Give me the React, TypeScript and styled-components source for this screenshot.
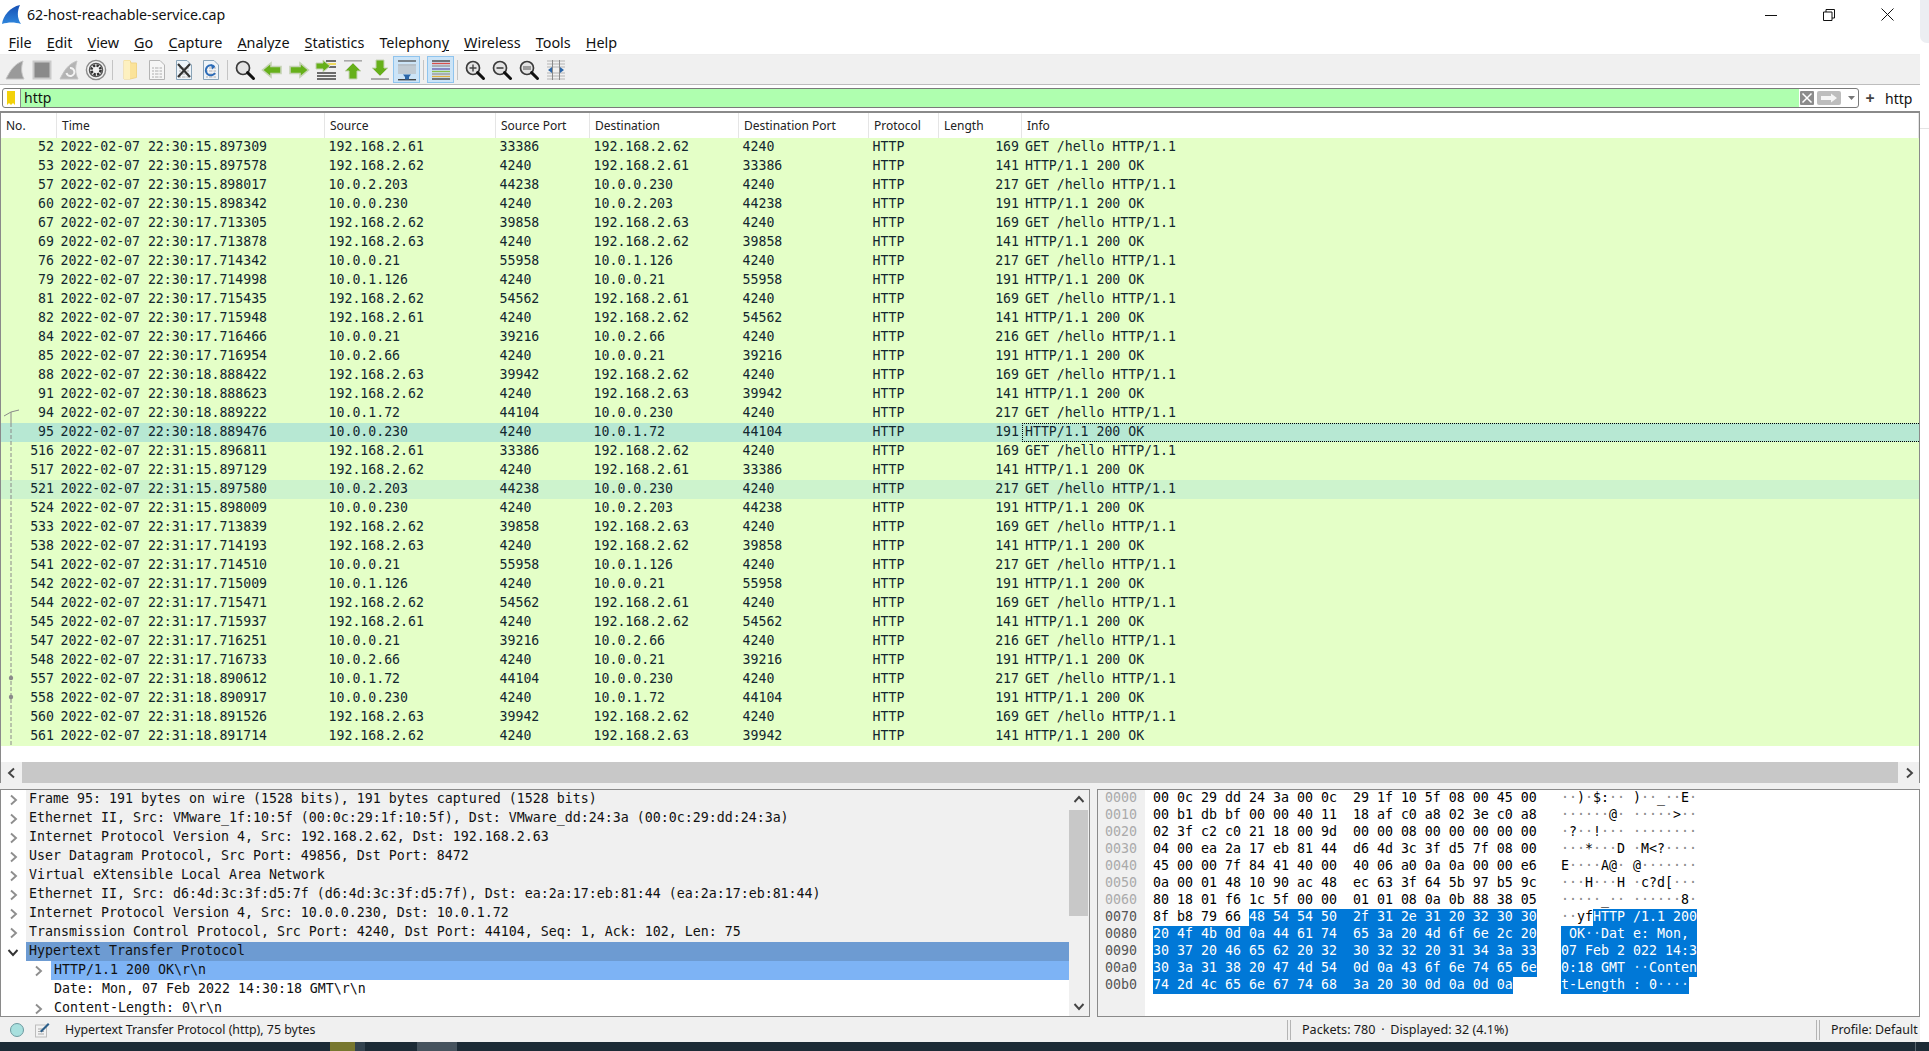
import React from "react";
import styled, { createGlobalStyle } from "styled-components";

const UI = `"Noto Sans", "Open Sans", sans-serif`;
const MONO = `"DejaVu Sans Mono", "Liberation Mono", monospace`;

const Global = createGlobalStyle`
  html, body { margin: 0; padding: 0; background: #fff; overflow: hidden; }
  * { box-sizing: border-box; }
`;

const Page = styled.div`
  width: 1929px;
  height: 1051px;
  display: flex;
  flex-direction: column;
  font-family: ${UI};
  overflow: hidden;
`;
const Desktop = styled.div`
  flex: 1;
  display: flex;
  min-height: 0;
`;
const Window = styled.div`
  width: 1920px;
  display: flex;
  flex-direction: column;
  background: #fff;
`;
const EdgeStrip = styled.div`
  flex: 1;
  background: #fff;
  display: flex;
  flex-direction: column;
`;
const EdgeCorner = styled.div`
  height: 43px;
  background: #eceef2;
  border-bottom-left-radius: 7px;
`;
const EdgeLine = styled.div`
  height: 1px;
  margin-top: 85px;
  background: #e4e4e4;
`;
const Taskbar = styled.div`
  height: 9px;
  background: #1c2b36;
  display: flex;
`;
const TaskGap = styled.div<{ $w: number }>`
  width: ${(p) => p.$w}px;
`;
const TaskTile = styled.div<{ $w: number; $c: string }>`
  width: ${(p) => p.$w}px;
  background: ${(p) => p.$c};
`;

const TitleBar = styled.div`
  height: 33px;
  display: flex;
  align-items: center;
  padding: 0 0 4px 2px;
`;
const TitleText = styled.div`
  margin-left: 6px;
  font-size: 14.2px;
  color: #111;
  flex: 1;
`;
const WinButtons = styled.div`
  display: flex;
  align-items: center;
  gap: 46px;
  padding: 0 26px 0 0;
`;
const MenuBar = styled.div`
  height: 22px;
  display: flex;
  align-items: center;
  padding: 0 0 2px 8.5px;
  gap: 15.1px;
  border-bottom: 1px solid #eeeeee;
  font-size: 14.4px;
  color: #111;
`;
const MenuItem = styled.span`
  white-space: pre;
  u { text-underline-offset: 2px; }
`;
const ToolBar = styled.div`
  height: 30px;
  background: #f0f0f0;
  border-bottom: 1px solid #bdbdbd;
  display: flex;
  align-items: center;
  padding-left: 1px;
`;
const ToolButton = styled.div<{ $active?: boolean }>`
  width: 27px;
  height: 27px;
  display: flex;
  align-items: center;
  justify-content: center;
  background: ${(p) => (p.$active ? "#cce4f7" : "transparent")};
  border: 1px solid ${(p) => (p.$active ? "#8fc4ee" : "transparent")};
`;
const ToolSep = styled.div`
  width: 1px;
  height: 20px;
  margin: 0 3px;
  background: #c4c4c4;
`;
const FilterBar = styled.div`
  height: 26px;
  padding: 3px 0 3px 2px;
  display: flex;
  align-items: center;
  background: #fff;
`;
const FilterBox = styled.div`
  width: 1857px;
  height: 20px;
  border: 1px solid #7a7a7a;
  border-radius: 3px;
  display: flex;
  align-items: center;
  overflow: hidden;
`;
const FilterBookmark = styled.div`
  width: 18px;
  height: 100%;
  display: flex;
  align-items: center;
  padding-left: 4px;
  border-right: 1px solid #8a8a8a;
`;
const FilterInput = styled.div`
  flex: 1;
  height: 100%;
  background: #afffaf;
  font-size: 14px;
  line-height: 17px;
  padding-left: 3px;
  color: #111;
`;
const FilterTail = styled.div`
  width: 59px;
  height: 100%;
  display: flex;
  align-items: center;
  padding-left: 1px;
  gap: 3px;
`;
const FilterPlus = styled.div`
  width: 30px;
  text-align: center;
  font-size: 16px;
  font-weight: 700;
  color: #444;
  margin-left: -4px;
`;
const FilterLabel = styled.div`
  font-size: 14px;
  color: #111;
`;

const PacketList = styled.div`
  height: 672px;
  border: 1px solid #8a8a8a;
  border-top-width: 2px;
  border-bottom: 0;
  display: flex;
  flex-direction: column;
`;
const COLS = "56px 268px 171px 94px 149px 130px 70px 83px 1fr";
const HeaderRow = styled.div`
  height: 25px;
  display: grid;
  grid-template-columns: ${COLS};
  background: #fff;
`;
const HeaderCell = styled.div`
  font-size: 12px;
  line-height: 26px;
  padding-left: 5px;
  color: #222;
  border-right: 1px solid #e5e5e5;
  white-space: nowrap;
`;
const PacketBody = styled.div`
  position: relative;
  height: 624px;
  background: #fff;
`;
const RelationMark = styled.svg`
  position: absolute;
  left: 0;
  top: 0;
`;
const PacketRow = styled.div<{ $bg: string }>`
  height: 19px;
  display: grid;
  grid-template-columns: ${COLS};
  background: ${(p) => p.$bg};
  font-family: ${MONO};
  font-size: 13.2px;
  line-height: 18px;
  color: #12272e;
`;
const Cell = styled.div<{ $right?: boolean }>`
  padding: 0 3px 0 3.6px;
  text-align: ${(p) => (p.$right ? "right" : "left")};
  white-space: pre;
`;
const InfoCell = styled(Cell)<{ $focus?: boolean }>`
  padding-left: 3px;
  ${(p) =>
    p.$focus
      ? `border: 1px dotted #000; border-right: 0; padding-left: 2px; line-height: 16px;`
      : ""}
`;
const HScroll = styled.div`
  height: 21px;
  display: flex;
  background: #c8c8c8;
`;
const ScrollEnd = styled.div`
  width: 21px;
  background: #f0f0f0;
  display: flex;
  align-items: center;
  justify-content: center;
`;
const HThumb = styled.div`
  flex: 1;
`;
const Splitter = styled.div`
  height: 6px;
  background: #f0f0f0;
`;
const DetailArea = styled.div`
  height: 228px;
  display: flex;
  background: #f0f0f0;
`;
const TreePane = styled.div`
  width: 1090px;
  border: 1px solid #8a8a8a;
  display: flex;
  background: #fff;
  overflow: hidden;
`;
const TreeRows = styled.div`
  flex: 1;
  overflow: hidden;
  font-family: ${MONO};
  font-size: 13.29px;
  line-height: 18px;
  color: #111;
`;
const TreeRow = styled.div<{ $level: number }>`
  height: 19px;
  display: flex;
  padding-left: ${(p) => p.$level * 25}px;
  white-space: pre;
`;
const TreeArrow = styled.div`
  width: 25px;
  height: 19px;
  display: flex;
  align-items: center;
  justify-content: center;
  padding-right: 2px;
  background: #fff;
`;
const TreeLabel = styled.div<{ $bg: string }>`
  flex: 1;
  padding-left: 3px;
  background: ${(p) => p.$bg};
`;
const VScroll = styled.div`
  width: 20px;
  display: flex;
  flex-direction: column;
  background: #f0f0f0;
`;
const VArrow = styled.div`
  height: 20px;
  display: flex;
  align-items: center;
  justify-content: center;
`;
const VThumb = styled.div`
  height: 106px;
  width: 19px;
  background: #c8c8c8;
`;
const VTrack = styled.div`
  flex: 1;
`;
const HexPane = styled.div`
  width: 823px;
  margin-left: 7px;
  border: 1px solid #8a8a8a;
  display: flex;
  background: #fff;
  font-family: ${MONO};
  font-size: 13.29px;
  line-height: 16px;
  color: #000;
`;
const Gutter = styled.div`
  width: 47px;
  background: #f0f0f0;
  padding-left: 7px;
`;
const Offset = styled.div<{ $hot: boolean }>`
  height: 17px;
  color: ${(p) => (p.$hot ? "#555" : "#aaa")};
`;
const HexBody = styled.div`
  padding-left: 8px;
`;
const HexLine = styled.div`
  height: 17px;
  display: flex;
  white-space: pre;
`;
const HexBytes = styled.div`
  width: 408px;
`;
const Sel = styled.span`
  background: #0078d7;
  color: #fff;
  display: inline-block;
  height: 17px;
`;
const Dot = styled.span<{ $on?: boolean }>`
  color: ${(p) => (p.$on ? "#cfe4f7" : "#8a8a8a")};
`;

const StatusBar = styled.div`
  height: 25px;
  background: #f0f0f0;
  display: flex;
  align-items: center;
  font-size: 12.4px;
  color: #1a1a1a;
`;
const StatusIcons = styled.div`
  width: 65px;
  display: flex;
  align-items: center;
  gap: 10px;
  padding-left: 10px;
`;
const StatusDot = styled.div`
  width: 14px;
  height: 14px;
  border-radius: 50%;
  background: #a8e0de;
  border: 1px solid #6d9aa0;
`;
const StatusMain = styled.div`
  width: 1222px;
`;
const StatusSplit = styled.div`
  width: 4px;
  height: 20px;
  border-left: 1px solid #b4b4b4;
  border-right: 1px solid #b4b4b4;
`;
const StatusMid = styled.div`
  width: 525px;
  padding-left: 11px;
  font-size: 12.6px;
`;
const StatusDotSep = styled.span`
  margin: 0 2.5px;
`;
const StatusRight = styled.div`
  padding-left: 11px;
`;

/* ---------- icons ---------- */
const I = styled.svg`
  display: block;
  flex: none;
`;
const Ic: React.FC<{ children: React.ReactNode }> = ({ children }) => (
  <I width="22" height="22" viewBox="0 0 22 22">
    {children}
  </I>
);
const Shark = ({ fill = "#9a9a9a" }: { fill?: string }) => (
  <path d="M2 20 C6 12 10 5 19 2 C17 8 17 14 20 20 Z" fill={fill} stroke="#c4c4c4" strokeWidth="1" />
);
const lines = (ys: number[], x1: number, x2: number, c: string | string[], w = 1) =>
  ys.map((y, i) => (
    <line key={i} x1={x1} x2={x2} y1={y} y2={y} stroke={Array.isArray(c) ? c[i] : c} strokeWidth={w} />
  ));
const Doc = ({ tint = "#f6f6f6", edge = "#b4b4b4" }: { tint?: string; edge?: string }) => (
  <>
    <path d="M3.5 1.5 H14 L18.5 6 V20.5 H3.5 Z" fill={tint} stroke={edge} />
    {lines([9, 12, 15, 18], 6, 16, "#cfcfcf", 1.8)}
    <path d="M8.5 8 V19 M13 8 V19" stroke="#f6f6f6" strokeWidth="1" />
  </>
);
const Mag = ({ sign }: { sign?: "+" | "-" | "0" }) => (
  <>
    <circle cx="9" cy="9" r="6.5" fill="#e4e4e4" stroke="#3a3a3a" strokeWidth="1.7" />
    <line x1="13.6" y1="13.6" x2="19.5" y2="19.5" stroke="#111" strokeWidth="3" strokeLinecap="round" />
    {sign === "+" && <path d="M5.5 9 H12.5 M9 5.5 V12.5" stroke="#444" strokeWidth="1.4" />}
    {sign === "-" && <path d="M5.5 9 H12.5" stroke="#444" strokeWidth="1.6" />}
    {sign === "0" && <path d="M5 8 H13 M5 10 H13" stroke="#555" strokeWidth="1.2" />}
  </>
);
const arrowL = "M1.5 11 L10 4 V7.5 H20 V14.5 H10 V18 Z";
const arrowR = "M20.5 11 L12 4 V7.5 H2 V14.5 H12 V18 Z";
const GREEN = "#66b01a";
const PALE = "#c6d3b6";

const tools: (React.ReactNode | "sep" | { active: React.ReactNode })[] = [
  <Ic><Shark /></Ic>,
  <Ic><rect x="2.5" y="2.5" width="17" height="17" fill="#8a8a8a" stroke="#cacaca" strokeWidth="2" /></Ic>,
  <Ic><Shark fill="#b4b4b4" /><path d="M12 9 A4 4 0 1 1 8.5 14" fill="none" stroke="#f4f4f4" strokeWidth="2" /></Ic>,
  <Ic>
    <circle cx="11" cy="11" r="9.6" fill="#f2f2f2" stroke="#8a8a8a" strokeWidth="1.4" />
    <circle cx="11" cy="11" r="6.6" fill="none" stroke="#555" strokeWidth="1.3" />
    <circle cx="11" cy="11" r="4.6" fill="none" stroke="#333" strokeWidth="2.6" strokeDasharray="2.4 1.2" />
    <circle cx="11" cy="11" r="2" fill="#f2f2f2" />
  </Ic>,
  "sep",
  <Ic><path d="M5 1.5 H11 L12 4 H17.5 V18.5 L11 20 H5 Z" fill="#fbe39a" stroke="#f0d58a" /><path d="M5 1.5 H11 V20 H5 Z" fill="#fdf0c0" /></Ic>,
  <Ic><Doc /></Ic>,
  <Ic><Doc tint="#eef4f9" edge="#8aa4b8" /><path d="M5 5 L17 18 M17 5 L5 18" stroke="#333" strokeWidth="2.2" /></Ic>,
  <Ic><Doc tint="#eef4f9" edge="#8aa4b8" /><path d="M14.5 8 A5 5 0 1 0 15 14" fill="none" stroke="#2c6cb8" strokeWidth="2" /><path d="M11 5 L15 8 L12 10.5 Z" fill="#2c6cb8" /></Ic>,
  "sep",
  <Ic><Mag /></Ic>,
  <Ic><path d={arrowL} fill={GREEN} stroke={PALE} strokeWidth="1.6" /></Ic>,
  <Ic><path d={arrowR} fill={GREEN} stroke={PALE} strokeWidth="1.6" /></Ic>,
  <Ic>
    {lines([2, 5, 8], 11, 21, ["#333", "#f0d020", "#333"], 1.4)}
    {lines([14, 17, 20], 2, 21, "#333", 1.4)}
    <path d="M15 7 L8 1 V4 H1 V10 H8 V13 Z" fill={GREEN} stroke={PALE} />
  </Ic>,
  <Ic>
    <rect x="2" y="1" width="18" height="1.6" fill="#aaa" />
    <path d="M11 4 L19 12 H15 V20 H7 V12 H3 Z" fill={GREEN} stroke={PALE} />
  </Ic>,
  <Ic>
    <rect x="2" y="19" width="18" height="2" fill="#aaa" />
    <path d="M11 17 L19 9 H15 V1 H7 V9 H3 Z" fill={GREEN} stroke={PALE} />
  </Ic>,
  {
    active: (
      <Ic>
        {lines([2, 6, 8, 10, 12, 14], 2, 20, ["#444", "#aaa", "#bbb", "#bbb", "#bbb", "#bbb"], 1.2)}
        <rect x="2" y="20" width="18" height="1.4" fill="#444" />
        <path d="M7 15.5 H15 L13 18 V20.5 H9 V18 Z" fill="#2b66a8" />
      </Ic>
    ),
  },
  "sep",
  {
    active: (
      <Ic>
        {lines([2, 4.5, 7, 10, 12.5, 15, 17.5, 20], 2, 20, ["#444", "#d8504a", "#9a9a9a", "#6a62b0", "#8cc04a", "#999", "#e0b040", "#444"], 1.4)}
      </Ic>
    ),
  },
  "sep",
  <Ic><Mag sign="+" /></Ic>,
  <Ic><Mag sign="-" /></Ic>,
  <Ic><Mag sign="0" /></Ic>,
  <Ic>
    {lines([2, 5, 8, 14, 17, 20], 2, 20, "#b4b4b4", 1)}
    <path d="M7.5 1 V21 M14.5 1 V21" stroke="#8a8a8a" />
    <path d="M3 11 L7 8 V14 Z M19 11 L15 8 V14 Z" fill="#2b66a8" />
  </Ic>,
];

const Chevron = ({ dir, color = "#8e8e8e", size = 12 }: { dir: "l" | "r" | "u" | "d"; color?: string; size?: number }) => {
  const d = { r: "M4 1.5 L9 6 L4 10.5", l: "M8 1.5 L3 6 L8 10.5", u: "M1.5 8 L6 3 L10.5 8", d: "M1.5 4 L6 9 L10.5 4" }[dir];
  return (
    <I width={size} height={size} viewBox="0 0 12 12">
      <path d={d} fill="none" stroke={color} strokeWidth="1.9" />
    </I>
  );
};

/* ---------- data ---------- */
const raw = `52|30:15.897309|192.168.2.61|33386|192.168.2.62|4240|169
53|30:15.897578|192.168.2.62|4240|192.168.2.61|33386|141
57|30:15.898017|10.0.2.203|44238|10.0.0.230|4240|217
60|30:15.898342|10.0.0.230|4240|10.0.2.203|44238|191
67|30:17.713305|192.168.2.62|39858|192.168.2.63|4240|169
69|30:17.713878|192.168.2.63|4240|192.168.2.62|39858|141
76|30:17.714342|10.0.0.21|55958|10.0.1.126|4240|217
79|30:17.714998|10.0.1.126|4240|10.0.0.21|55958|191
81|30:17.715435|192.168.2.62|54562|192.168.2.61|4240|169
82|30:17.715948|192.168.2.61|4240|192.168.2.62|54562|141
84|30:17.716466|10.0.0.21|39216|10.0.2.66|4240|216
85|30:17.716954|10.0.2.66|4240|10.0.0.21|39216|191
88|30:18.888422|192.168.2.63|39942|192.168.2.62|4240|169
91|30:18.888623|192.168.2.62|4240|192.168.2.63|39942|141
94|30:18.889222|10.0.1.72|44104|10.0.0.230|4240|217
95|30:18.889476|10.0.0.230|4240|10.0.1.72|44104|191
516|31:15.896811|192.168.2.61|33386|192.168.2.62|4240|169
517|31:15.897129|192.168.2.62|4240|192.168.2.61|33386|141
521|31:15.897580|10.0.2.203|44238|10.0.0.230|4240|217
524|31:15.898009|10.0.0.230|4240|10.0.2.203|44238|191
533|31:17.713839|192.168.2.62|39858|192.168.2.63|4240|169
538|31:17.714193|192.168.2.63|4240|192.168.2.62|39858|141
541|31:17.714510|10.0.0.21|55958|10.0.1.126|4240|217
542|31:17.715009|10.0.1.126|4240|10.0.0.21|55958|191
544|31:17.715471|192.168.2.62|54562|192.168.2.61|4240|169
545|31:17.715937|192.168.2.61|4240|192.168.2.62|54562|141
547|31:17.716251|10.0.0.21|39216|10.0.2.66|4240|216
548|31:17.716733|10.0.2.66|4240|10.0.0.21|39216|191
557|31:18.890612|10.0.1.72|44104|10.0.0.230|4240|217
558|31:18.890917|10.0.0.230|4240|10.0.1.72|44104|191
560|31:18.891526|192.168.2.63|39942|192.168.2.62|4240|169
561|31:18.891714|192.168.2.62|4240|192.168.2.63|39942|141`;
const packets = raw.split("\n").map((l) => l.split("|"));
const headers = ["No.", "Time", "Source", "Source Port", "Destination", "Destination Port", "Protocol", "Length", "Info"];

const tree: { level: number; text: string; arrow?: "r" | "d"; bg: string }[] = [
  { level: 0, arrow: "r", bg: "#f0f0f0", text: "Frame 95: 191 bytes on wire (1528 bits), 191 bytes captured (1528 bits)" },
  { level: 0, arrow: "r", bg: "#f0f0f0", text: "Ethernet II, Src: VMware_1f:10:5f (00:0c:29:1f:10:5f), Dst: VMware_dd:24:3a (00:0c:29:dd:24:3a)" },
  { level: 0, arrow: "r", bg: "#f0f0f0", text: "Internet Protocol Version 4, Src: 192.168.2.62, Dst: 192.168.2.63" },
  { level: 0, arrow: "r", bg: "#f0f0f0", text: "User Datagram Protocol, Src Port: 49856, Dst Port: 8472" },
  { level: 0, arrow: "r", bg: "#f0f0f0", text: "Virtual eXtensible Local Area Network" },
  { level: 0, arrow: "r", bg: "#f0f0f0", text: "Ethernet II, Src: d6:4d:3c:3f:d5:7f (d6:4d:3c:3f:d5:7f), Dst: ea:2a:17:eb:81:44 (ea:2a:17:eb:81:44)" },
  { level: 0, arrow: "r", bg: "#f0f0f0", text: "Internet Protocol Version 4, Src: 10.0.0.230, Dst: 10.0.1.72" },
  { level: 0, arrow: "r", bg: "#f0f0f0", text: "Transmission Control Protocol, Src Port: 4240, Dst Port: 44104, Seq: 1, Ack: 102, Len: 75" },
  { level: 0, arrow: "d", bg: "#6d9bd2", text: "Hypertext Transfer Protocol" },
  { level: 1, arrow: "r", bg: "#7db3f5", text: "HTTP/1.1 200 OK\\r\\n" },
  { level: 1, bg: "#fff", text: "Date: Mon, 07 Feb 2022 14:30:18 GMT\\r\\n" },
  { level: 1, arrow: "r", bg: "#fff", text: "Content-Length: 0\\r\\n" },
];

const hexRows = [
  "00 0c 29 dd 24 3a 00 0c 29 1f 10 5f 08 00 45 00",
  "00 b1 db bf 00 00 40 11 18 af c0 a8 02 3e c0 a8",
  "02 3f c2 c0 21 18 00 9d 00 00 08 00 00 00 00 00",
  "04 00 ea 2a 17 eb 81 44 d6 4d 3c 3f d5 7f 08 00",
  "45 00 00 7f 84 41 40 00 40 06 a0 0a 0a 00 00 e6",
  "0a 00 01 48 10 90 ac 48 ec 63 3f 64 5b 97 b5 9c",
  "80 18 01 f6 1c 5f 00 00 01 01 08 0a 0b 88 38 05",
  "8f b8 79 66 48 54 54 50 2f 31 2e 31 20 32 30 30",
  "20 4f 4b 0d 0a 44 61 74 65 3a 20 4d 6f 6e 2c 20",
  "30 37 20 46 65 62 20 32 30 32 32 20 31 34 3a 33",
  "30 3a 31 38 20 47 4d 54 0d 0a 43 6f 6e 74 65 6e",
  "74 2d 4c 65 6e 67 74 68 3a 20 30 0d 0a 0d 0a",
].map((r) => r.split(" "));

const hexText = (b: string[], offset: number) =>
  b.map((x, i) => (i === 8 + -offset && offset < 8 ? " " : "") + x).join(" ");

const asciiOf = (h: string) => {
  const c = parseInt(h, 16);
  return c >= 32 && c < 127 ? String.fromCharCode(c) : "·";
};
const AsciiRun: React.FC<{ bytes: string[]; start: number; on?: boolean }> = ({ bytes, start, on }) => (
  <>
    {bytes.map((h, i) => {
      const ch = asciiOf(h);
      const sp = start + i === 8 ? " " : "";
      return (
        <React.Fragment key={i}>
          {sp}
          {ch === "·" ? <Dot $on={on}>·</Dot> : ch}
        </React.Fragment>
      );
    })}
  </>
);

const menu: [string, string, string][] = [
  ["", "F", "ile"], ["", "E", "dit"], ["", "V", "iew"], ["", "G", "o"], ["", "C", "apture"],
  ["", "A", "nalyze"], ["", "S", "tatistics"], ["Telephon", "y", ""], ["", "W", "ireless"], ["", "T", "ools"], ["", "H", "elp"],
];

export default function App() {
  return (
    <Page>
      <Global />
      <Desktop>
        <Window>
          <TitleBar>
            <I width="19" height="20" viewBox="0 0 19 20">
              <defs>
                <linearGradient id="fin" x1="0" y1="0" x2="0" y2="1">
                  <stop offset="0" stopColor="#164fb4" />
                  <stop offset="1" stopColor="#2f86dc" />
                </linearGradient>
              </defs>
              <path d="M0 19 C1 11 8 2 18 0 C15 6 15 13 19 19 C13 17 6 17 0 19 Z" fill="url(#fin)" />
            </I>
            <TitleText>62-host-reachable-service.cap</TitleText>
            <WinButtons>
              <I width="12" height="12" viewBox="0 0 12 12"><path d="M0 6.5 H12" stroke="#111" strokeWidth="1" /></I>
              <I width="12" height="12" viewBox="0 0 12 12"><path d="M0.5 3 H9 V11.5 H0.5 Z M3 3 V0.5 H11.5 V9 H9" fill="none" stroke="#111" /></I>
              <I width="13" height="13" viewBox="0 0 13 13"><path d="M0.5 0.5 L12.5 12.5 M12.5 0.5 L0.5 12.5" stroke="#111" /></I>
            </WinButtons>
          </TitleBar>
          <MenuBar>
            {menu.map(([a, u, b]) => (
              <MenuItem key={a + u + b}>
                {a}
                <u>{u}</u>
                {b}
              </MenuItem>
            ))}
          </MenuBar>
          <ToolBar>
            {tools.map((t, i) => {
              if (t === "sep") return <ToolSep key={i} />;
              if (t && typeof t === "object" && "active" in (t as object))
                return (
                  <ToolButton key={i} $active>
                    {(t as { active: React.ReactNode }).active}
                  </ToolButton>
                );
              return <ToolButton key={i}>{t as React.ReactNode}</ToolButton>;
            })}
          </ToolBar>
          <FilterBar>
            <FilterBox>
              <FilterBookmark>
                <I width="8" height="14" viewBox="0 0 8 14"><path d="M0 0 H8 V14 L6 12 L4 14 L2 12 L0 14 Z" fill="#f2d10a" /></I>
              </FilterBookmark>
              <FilterInput>http</FilterInput>
              <FilterTail>
                <I width="14" height="14" viewBox="0 0 14 14"><rect width="14" height="14" rx="1" fill="#8c8c8c" /><path d="M2.5 2.5 L11.5 11.5 M11.5 2.5 L2.5 11.5" stroke="#fff" strokeWidth="1.5" /></I>
                <I width="24" height="14" viewBox="0 0 24 14"><rect width="24" height="14" rx="2" fill="#bdbdbd" /><path d="M4 5 H14 V2.5 L20 7 L14 11.5 V9 H4 Z" fill="#f5f5f5" /></I>
                <I width="14" height="14" viewBox="0 0 14 14"><path d="M4 5 H11 L7.5 9 Z" fill="#777" /></I>
              </FilterTail>
            </FilterBox>
            <FilterPlus>+</FilterPlus>
            <FilterLabel>http</FilterLabel>
          </FilterBar>
          <PacketList>
            <HeaderRow>
              {headers.map((h) => (
                <HeaderCell key={h}>{h}</HeaderCell>
              ))}
            </HeaderRow>
            <PacketBody>
              {packets.map((p) => {
                const isSel = p[0] === "95";
                const isMark = p[0] === "521";
                return (
                  <PacketRow key={p[0]} $bg={isSel ? "#b7e8d3" : isMark ? "#cdf3cd" : "#e4ffc7"}>
                    <Cell $right>{p[0]}</Cell>
                    <Cell>{`2022-02-07 22:${p[1]}`}</Cell>
                    <Cell>{p[2]}</Cell>
                    <Cell>{p[3]}</Cell>
                    <Cell>{p[4]}</Cell>
                    <Cell>{p[5]}</Cell>
                    <Cell>HTTP</Cell>
                    <Cell $right>{p[6]}</Cell>
                    <InfoCell $focus={isSel}>
                      {p[6] === "169" || p[6].startsWith("21") ? "GET /hello HTTP/1.1" : "HTTP/1.1 200 OK"}
                    </InfoCell>
                  </PacketRow>
                );
              })}
              <RelationMark width="22" height="624" viewBox="0 0 22 624">
                <path d="M3 278 L10 274 L18 272 M10 274 V285" fill="none" stroke="#8a8a8a" />
                <path d="M10 285 V608" fill="none" stroke="#8a8a8a" strokeDasharray="4 2" />
                <circle cx="10" cy="540" r="2.2" fill="#8a8a8a" />
                <circle cx="10" cy="559" r="2.2" fill="#8a8a8a" />
              </RelationMark>
            </PacketBody>
            <HScroll>
              <ScrollEnd><Chevron dir="l" color="#444" /></ScrollEnd>
              <HThumb />
              <ScrollEnd><Chevron dir="r" color="#444" /></ScrollEnd>
            </HScroll>
          </PacketList>
          <Splitter />
          <DetailArea>
            <TreePane>
              <TreeRows>
                {tree.map((r) => (
                  <TreeRow key={r.text} $level={r.level}>
                    <TreeArrow>
                      {r.arrow === "r" && <Chevron dir="r" />}
                      {r.arrow === "d" && <Chevron dir="d" color="#333" />}
                    </TreeArrow>
                    <TreeLabel $bg={r.bg}>{r.text}</TreeLabel>
                  </TreeRow>
                ))}
              </TreeRows>
              <VScroll>
                <VArrow><Chevron dir="u" color="#444" /></VArrow>
                <VThumb />
                <VTrack />
                <VArrow><Chevron dir="d" color="#444" /></VArrow>
              </VScroll>
            </TreePane>
            <HexPane>
              <Gutter>
                {hexRows.map((_, i) => (
                  <Offset key={i} $hot={i >= 7}>
                    {`00${i.toString(16)}0`}
                  </Offset>
                ))}
              </Gutter>
              <HexBody>
                {hexRows.map((b, i) => {
                  const selFrom = i < 7 ? 16 : i === 7 ? 4 : 0;
                  const pre = b.slice(0, selFrom);
                  const post = b.slice(selFrom);
                  const preHex = pre.length ? hexText(pre, 0) + " " : "";
                  return (
                    <HexLine key={i}>
                      <HexBytes>
                        {preHex}
                        {post.length > 0 && <Sel>{hexText(post, selFrom)}</Sel>}
                      </HexBytes>
                      <div>
                        <AsciiRun bytes={pre} start={0} />
                        {post.length > 0 && (
                          <Sel>
                            <AsciiRun bytes={post} start={selFrom} on />
                          </Sel>
                        )}
                      </div>
                    </HexLine>
                  );
                })}
              </HexBody>
            </HexPane>
          </DetailArea>
          <StatusBar>
            <StatusIcons>
              <StatusDot />
              <I width="16" height="16" viewBox="0 0 16 16">
                <rect x="1.5" y="3" width="11" height="12" fill="#f2f2f2" stroke="#bdbdbd" />
                <path d="M4 7 H10 M4 9.5 H10 M4 12 H10" stroke="#aaa" />
                <path d="M6 9 L14 1 L15.5 2.5 L7.5 10.5 Z" fill="#2b5f8a" />
              </I>
            </StatusIcons>
            <StatusMain>Hypertext Transfer Protocol (http), 75 bytes</StatusMain>
            <StatusSplit />
            <StatusMid>
              Packets: 780 <StatusDotSep>·</StatusDotSep> Displayed: 32 (4.1%)
            </StatusMid>
            <StatusSplit />
            <StatusRight>Profile: Default</StatusRight>
          </StatusBar>
        </Window>
        <EdgeStrip>
          <EdgeCorner />
          <EdgeLine />
        </EdgeStrip>
      </Desktop>
      <Taskbar>
        <TaskGap $w={330} />
        <TaskTile $w={25} $c="#77772f" />
        <TaskTile $w={10} $c="#33434f" />
        <TaskGap $w={52} />
        <TaskTile $w={40} $c="#46535e" />
        <TaskGap $w={1458} />
        <TaskTile $w={1} $c="#5a6670" />
      </Taskbar>
    </Page>
  );
}
